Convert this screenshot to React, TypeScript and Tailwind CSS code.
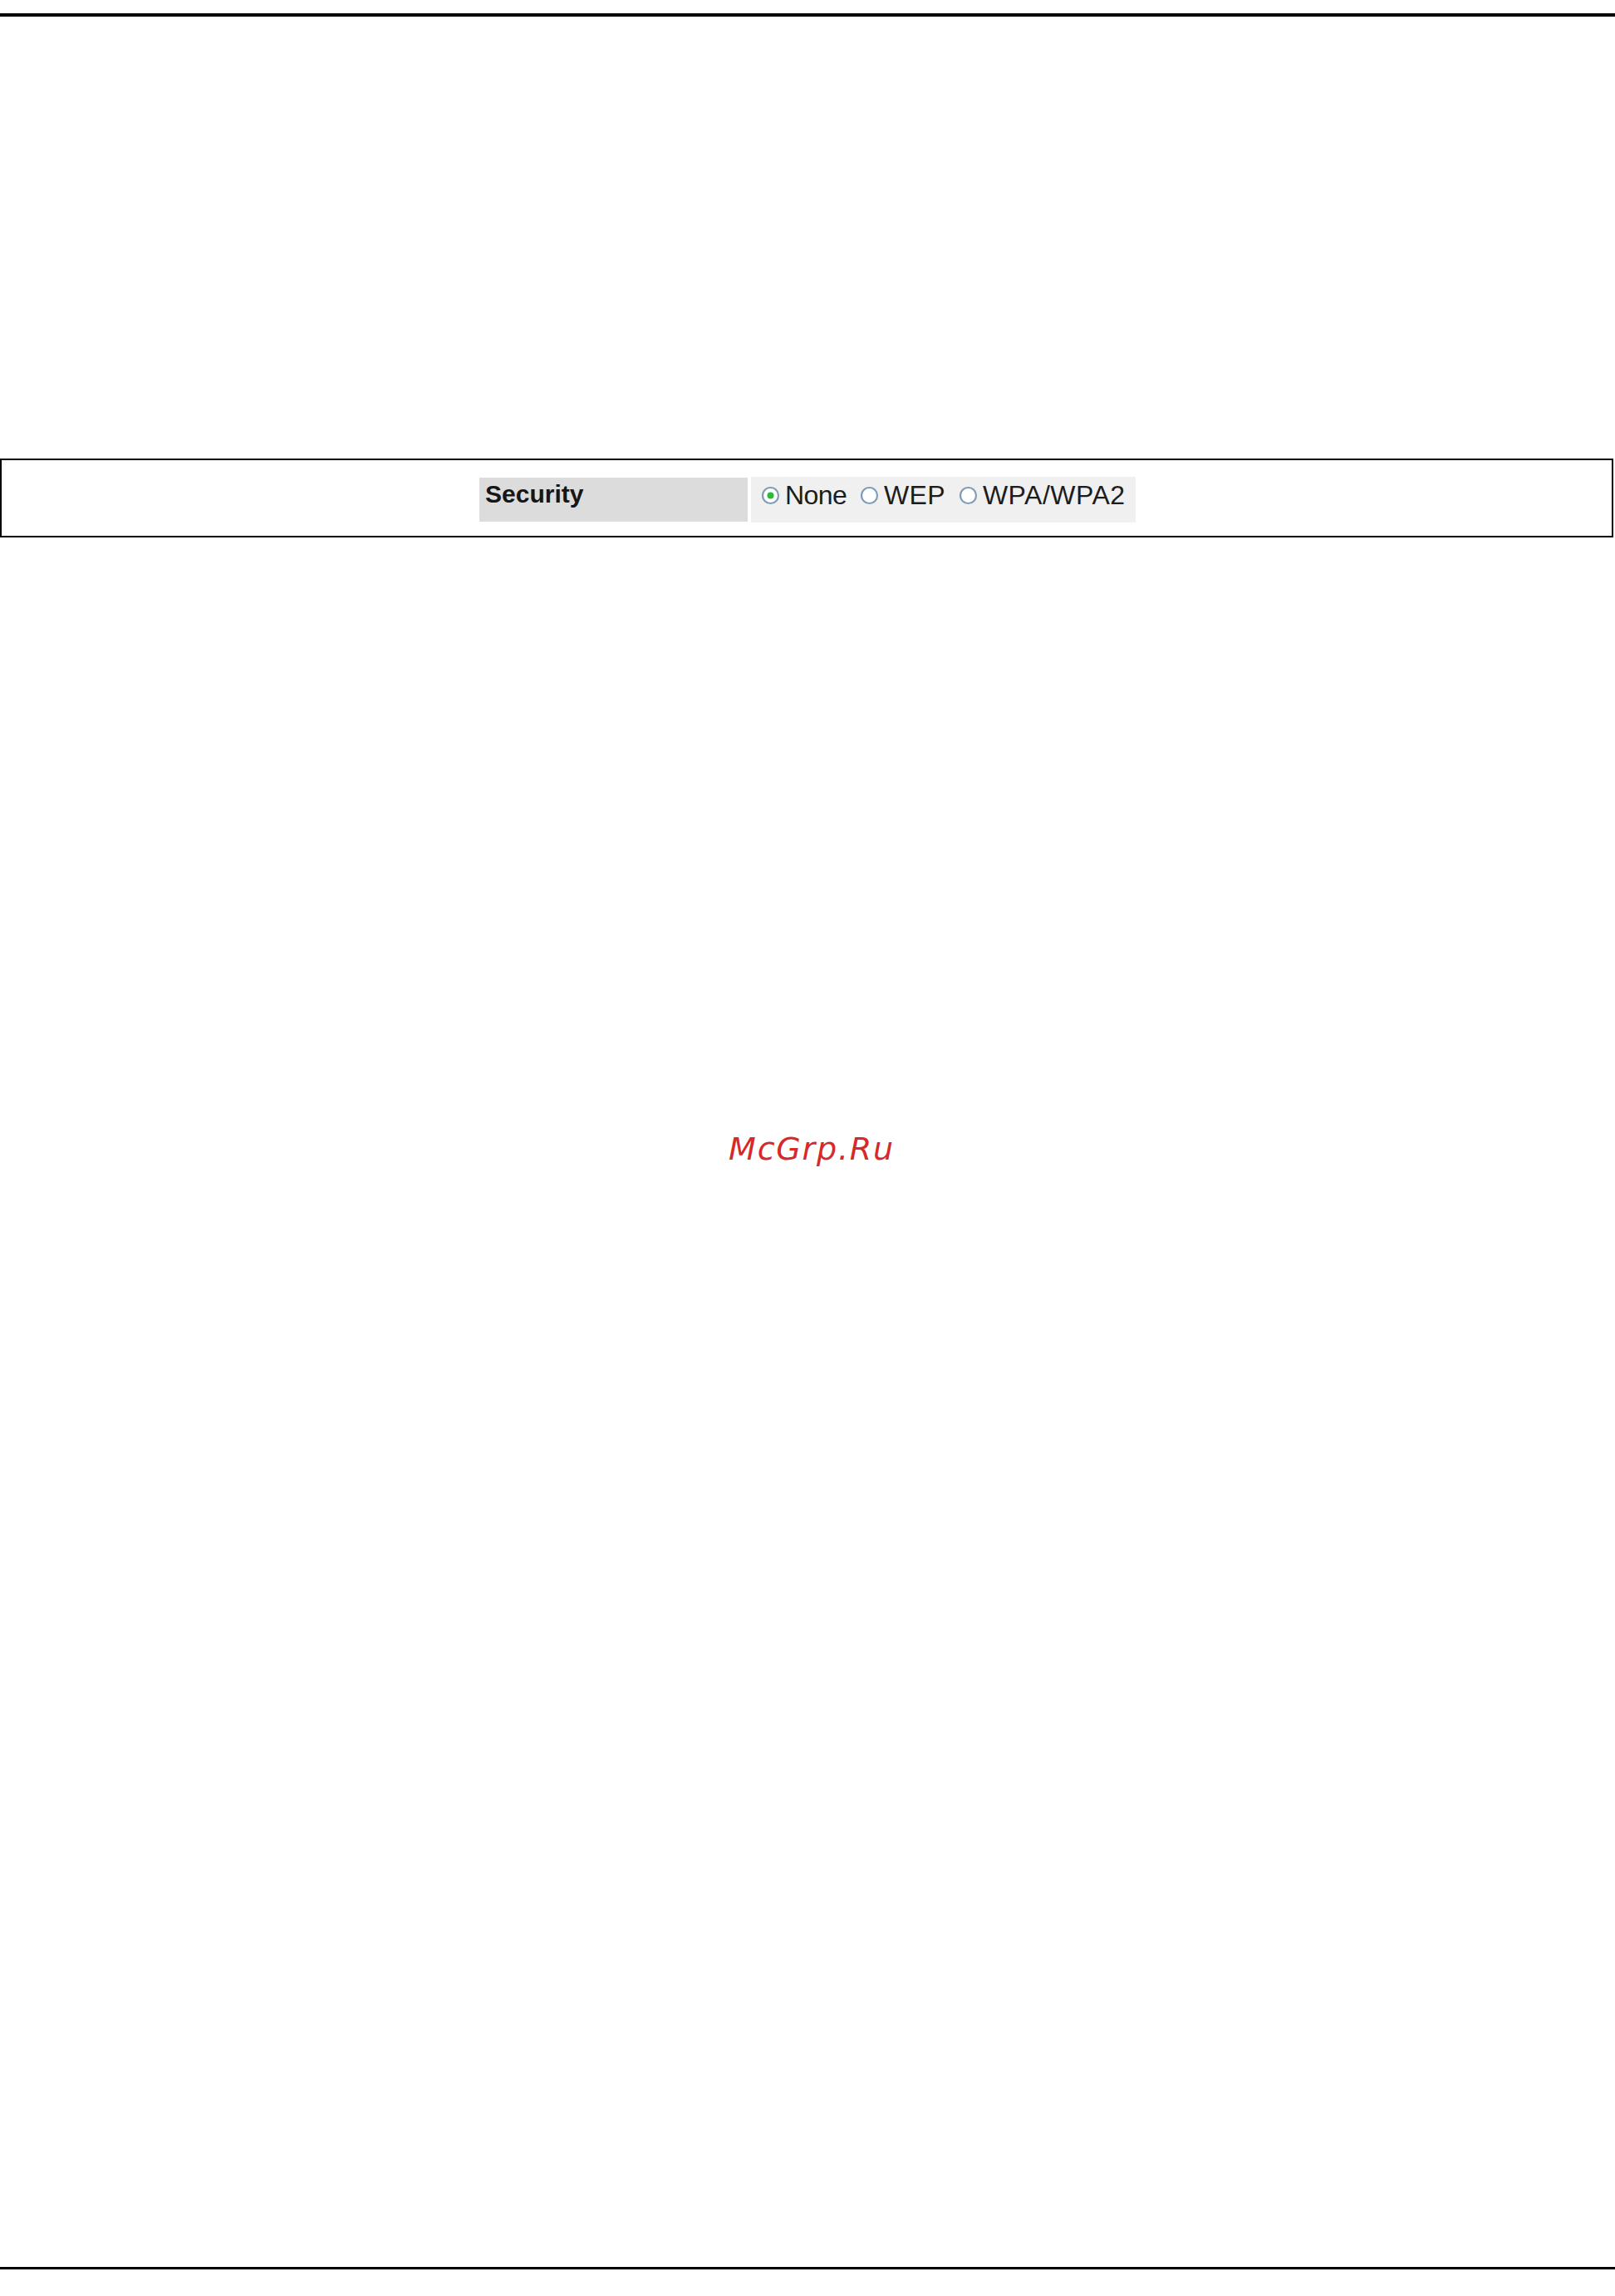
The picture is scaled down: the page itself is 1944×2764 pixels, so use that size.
import React from 'react'

function Radio({ checked }: { checked?: boolean }) {
  return (
    <svg width="23" height="23" viewBox="0 0 23 23" className="shrink-0">
      <circle cx="11.5" cy="11.5" r="9.5" fill="#ffffff" stroke="#7f9db8" strokeWidth="2.2" />
      {checked && <circle cx="11.5" cy="11.5" r="4" fill="#2fb83a" />}
    </svg>
  )
}

export default function App() {
  const options = [
    { label: 'None', checked: true, cls: 'tracking-[-0.6px]' },
    { label: 'WEP', checked: false, cls: 'tracking-[0.3px]' },
    { label: 'WPA/WPA2', checked: false, cls: 'tracking-[0.5px]' },
  ]

  return (
    <div className="w-[1944px] h-[2764px] bg-white overflow-hidden">
      <div className="mt-[16px] h-[4px] bg-black" />

      <div className="mt-[532px] w-[1942px] h-[95px] border-2 border-black flex justify-center items-start pt-[20px]">
        <div className="flex items-start gap-[4px] pl-[2px]">
          <div className="w-[323px] h-[53px] mt-[1px] bg-[#dcdcdc] pl-[7px]">
            <span className="block text-[30px] leading-[39px] font-bold text-[#161616] font-['Liberation_Sans',Arial,sans-serif]">
              Security
            </span>
          </div>
          <div className="w-[463px] h-[55px] bg-[#f0f0f0] pl-[12px] flex items-start gap-[16px] font-['Liberation_Sans',Arial,sans-serif] text-[32px] leading-[45px] text-[#1c1c1c]">
            {options.map((o) => (
              <label key={o.label} className="flex items-center gap-[6px]">
                <Radio checked={o.checked} />
                <span className={o.cls}>{o.label}</span>
              </label>
            ))}
          </div>
        </div>
      </div>

      <div className="mt-[717px] h-[38px] flex justify-center pl-[10px]">
        <span className="text-[38px] leading-[38px] italic tracking-[1.8px] text-[#d42a2a] font-['DejaVu_Sans',sans-serif]">
          McGrp.Ru
        </span>
      </div>

      <div className="mt-[1327px] h-[3px] bg-black" />
    </div>
  )
}
